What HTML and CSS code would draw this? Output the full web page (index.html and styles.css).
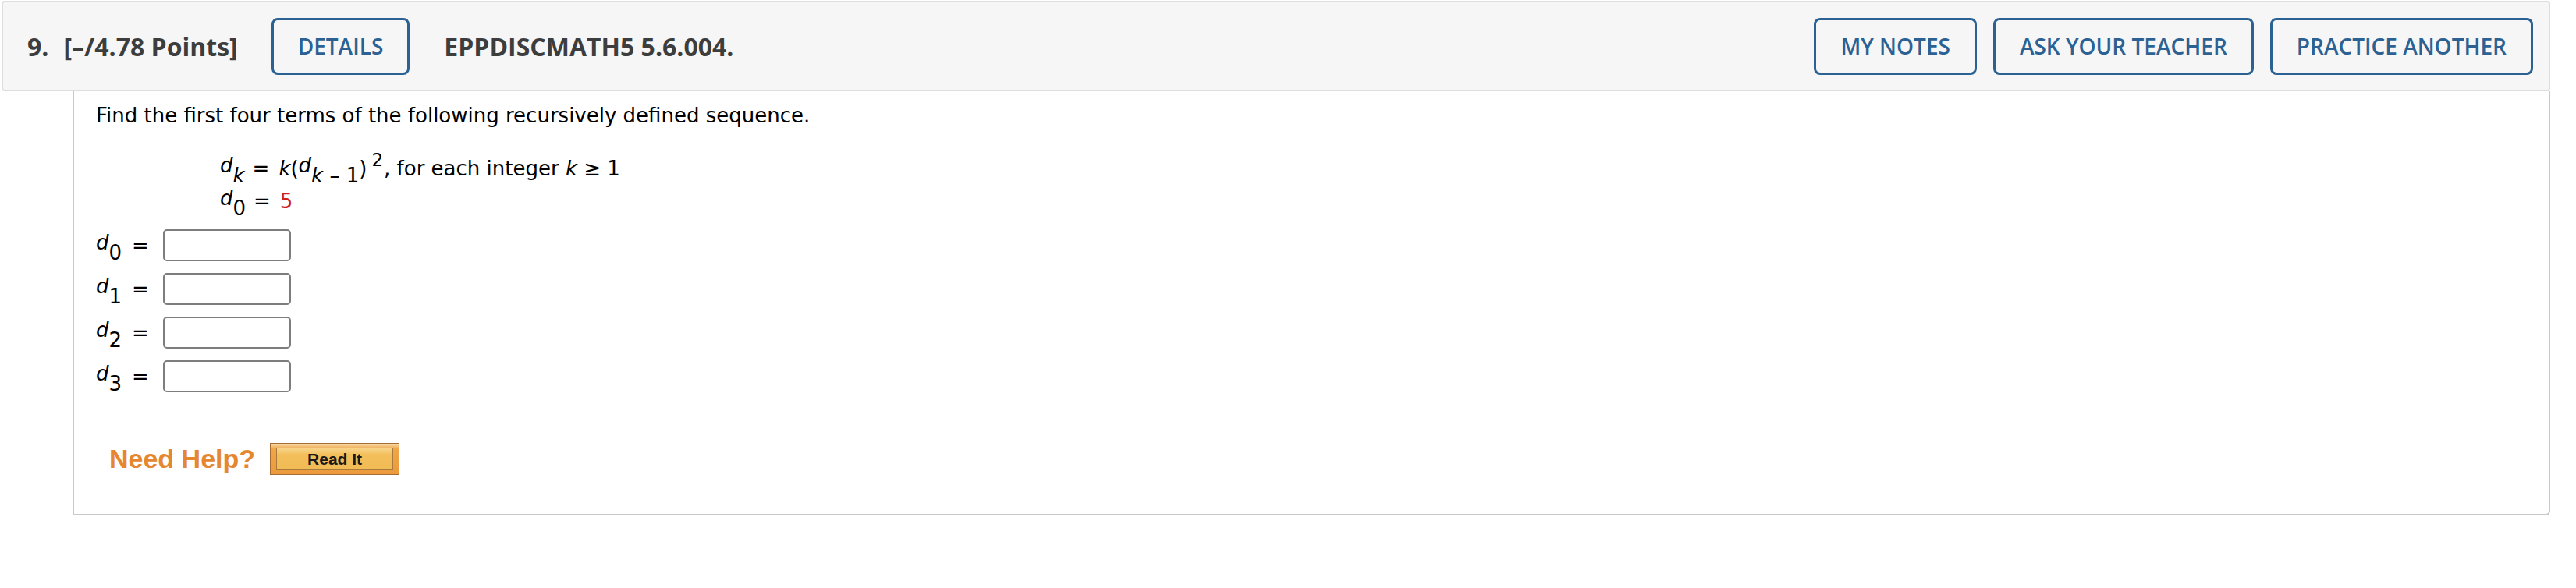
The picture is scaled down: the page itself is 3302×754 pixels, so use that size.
FILE: index.html
```html
<!DOCTYPE html>
<html lang="en">
<head>
<meta charset="utf-8">
<title>Question 9</title>
<link rel="stylesheet" href="styles.css">
</head>
<body>
<div class="question">
  <div class="qhead">
    <span class="qnum">9.</span>
    <span class="qpts">[–/4.78 Points]</span>
    <button class="btn details">DETAILS</button>
    <span class="qcode">EPPDISCMATH5 5.6.004.</span>
    <div class="actions">
      <button class="btn">MY NOTES</button>
      <button class="btn">ASK YOUR TEACHER</button>
      <button class="btn">PRACTICE ANOTHER</button>
    </div>
  </div>
  <div class="qbody">
    <p class="prompt">Find the first four terms of the following recursively defined sequence.</p>
    <div class="defs">
      <div class="mline"><span class="v">d</span><sub class="s"><i>k</i></sub><span class="op">=</span><i>k</i>(<span class="v">d</span><sub class="s"><i>k</i> – 1</sub>)<sup class="p">2</sup>, for each integer <i>k</i> ≥ 1</div>
      <div class="mline"><span class="v">d</span><sub class="s">0</sub><span class="op">=</span><span class="red">5</span></div>
    </div>
    <div class="answers">
      <div class="arow"><span class="lab"><span class="v">d</span><sub class="s">0</sub></span><span class="eq">=</span><input class="ans" type="text"></div>
      <div class="arow"><span class="lab"><span class="v">d</span><sub class="s">1</sub></span><span class="eq">=</span><input class="ans" type="text"></div>
      <div class="arow"><span class="lab"><span class="v">d</span><sub class="s">2</sub></span><span class="eq">=</span><input class="ans" type="text"></div>
      <div class="arow"><span class="lab"><span class="v">d</span><sub class="s">3</sub></span><span class="eq">=</span><input class="ans" type="text"></div>
    </div>
    <div class="help">
      <span class="needhelp">Need Help?</span>
      <button class="readit"><span class="readit-in">Read It</span></button>
    </div>
  </div>
</div>
</body>
</html>
```

FILE: styles.css
```css
html, body {
  margin: 0;
  padding: 0;
  background: #ffffff;
}

body {
  font-family: "DejaVu Sans", Verdana, sans-serif;
  color: #000;
}

.question {
  margin: 1px 0 0 2px;
  width: 3267px;
}

.qhead {
  box-sizing: border-box;
  height: 116px;
  display: flex;
  align-items: center;
  padding: 0 20px 0 31px;
  background: #f6f6f6;
  border: 2px solid #dedede;
  border-radius: 4px;
  font-family: "Open Sans", sans-serif;
  font-weight: 700;
  font-size: 32px;
  color: #3d3d3d;
}

.qnum {
  margin-right: 19px;
}

.qpts {
  margin-right: 43px;
}

.qcode {
  margin-left: 44px;
}

.actions {
  margin-left: auto;
  display: flex;
  gap: 21px;
}

.btn {
  box-sizing: border-box;
  height: 73px;
  padding: 0 31px;
  background: transparent;
  border: 3px solid #2b6293;
  border-radius: 8px;
  font-family: "Open Sans", sans-serif;
  font-weight: 600;
  font-size: 28px;
  color: #2b6293;
  white-space: nowrap;
}

.qbody {
  margin-left: 91px;
  padding: 16px 0 50px 28px;
  border: 2px solid #c9c9c9;
  border-top: none;
  border-bottom-right-radius: 6px;
  font-size: 26px;
}

.prompt {
  margin: 0;
  line-height: 30px;
}

.defs {
  margin: 32px 0 0 159px;
}

.mline {
  line-height: 42px;
  white-space: nowrap;
}

.v {
  font-style: italic;
  vertical-align: 4px;
  line-height: 0;
}

.s {
  font-size: 26px;
  line-height: 0;
  vertical-align: -9px;
}

.p {
  font-size: 23px;
  line-height: 0;
  vertical-align: 12px;
  margin: 0 1px 0 6px;
}

.op {
  margin: 0 12px 0 10px;
}

.red {
  color: #d0201c;
}

.answers {
  margin-top: 15px;
  display: flex;
  flex-direction: column;
  gap: 15px;
}

.arow {
  display: flex;
  align-items: center;
  height: 41px;
}

.lab {
  width: 46px;
  white-space: nowrap;
}

.eq {
  width: 40px;
}

.ans {
  box-sizing: border-box;
  width: 164px;
  height: 41px;
  margin: 0;
  border: 2px solid #7d7d7d;
  border-radius: 5px;
  background: #fff;
}

.help {
  margin: 65px 0 0 17px;
  display: flex;
  align-items: center;
  gap: 19px;
}

.needhelp {
  font-family: "Liberation Sans", Arial, sans-serif;
  font-weight: 700;
  font-size: 34px;
  color: #e5872f;
}

.readit {
  box-sizing: border-box;
  width: 166px;
  height: 41px;
  margin: 0;
  padding: 5px 7px 5px 7px;
  border: 1px solid #a86d34;
  background: linear-gradient(#f6d9a6 0, #efa548 18%, #ec9a3c 100%);
  display: flex;
}

.readit-in {
  flex: 1;
  box-sizing: border-box;
  border: 1px solid #a87a3c;
  background: linear-gradient(#f7d48a 0, #f3bf5b 30%, #f1bb55 100%);
  font-family: "Liberation Sans", Arial, sans-serif;
  font-weight: 700;
  font-size: 21px;
  line-height: 27px;
  color: #1a1a1a;
  text-align: center;
}
```
